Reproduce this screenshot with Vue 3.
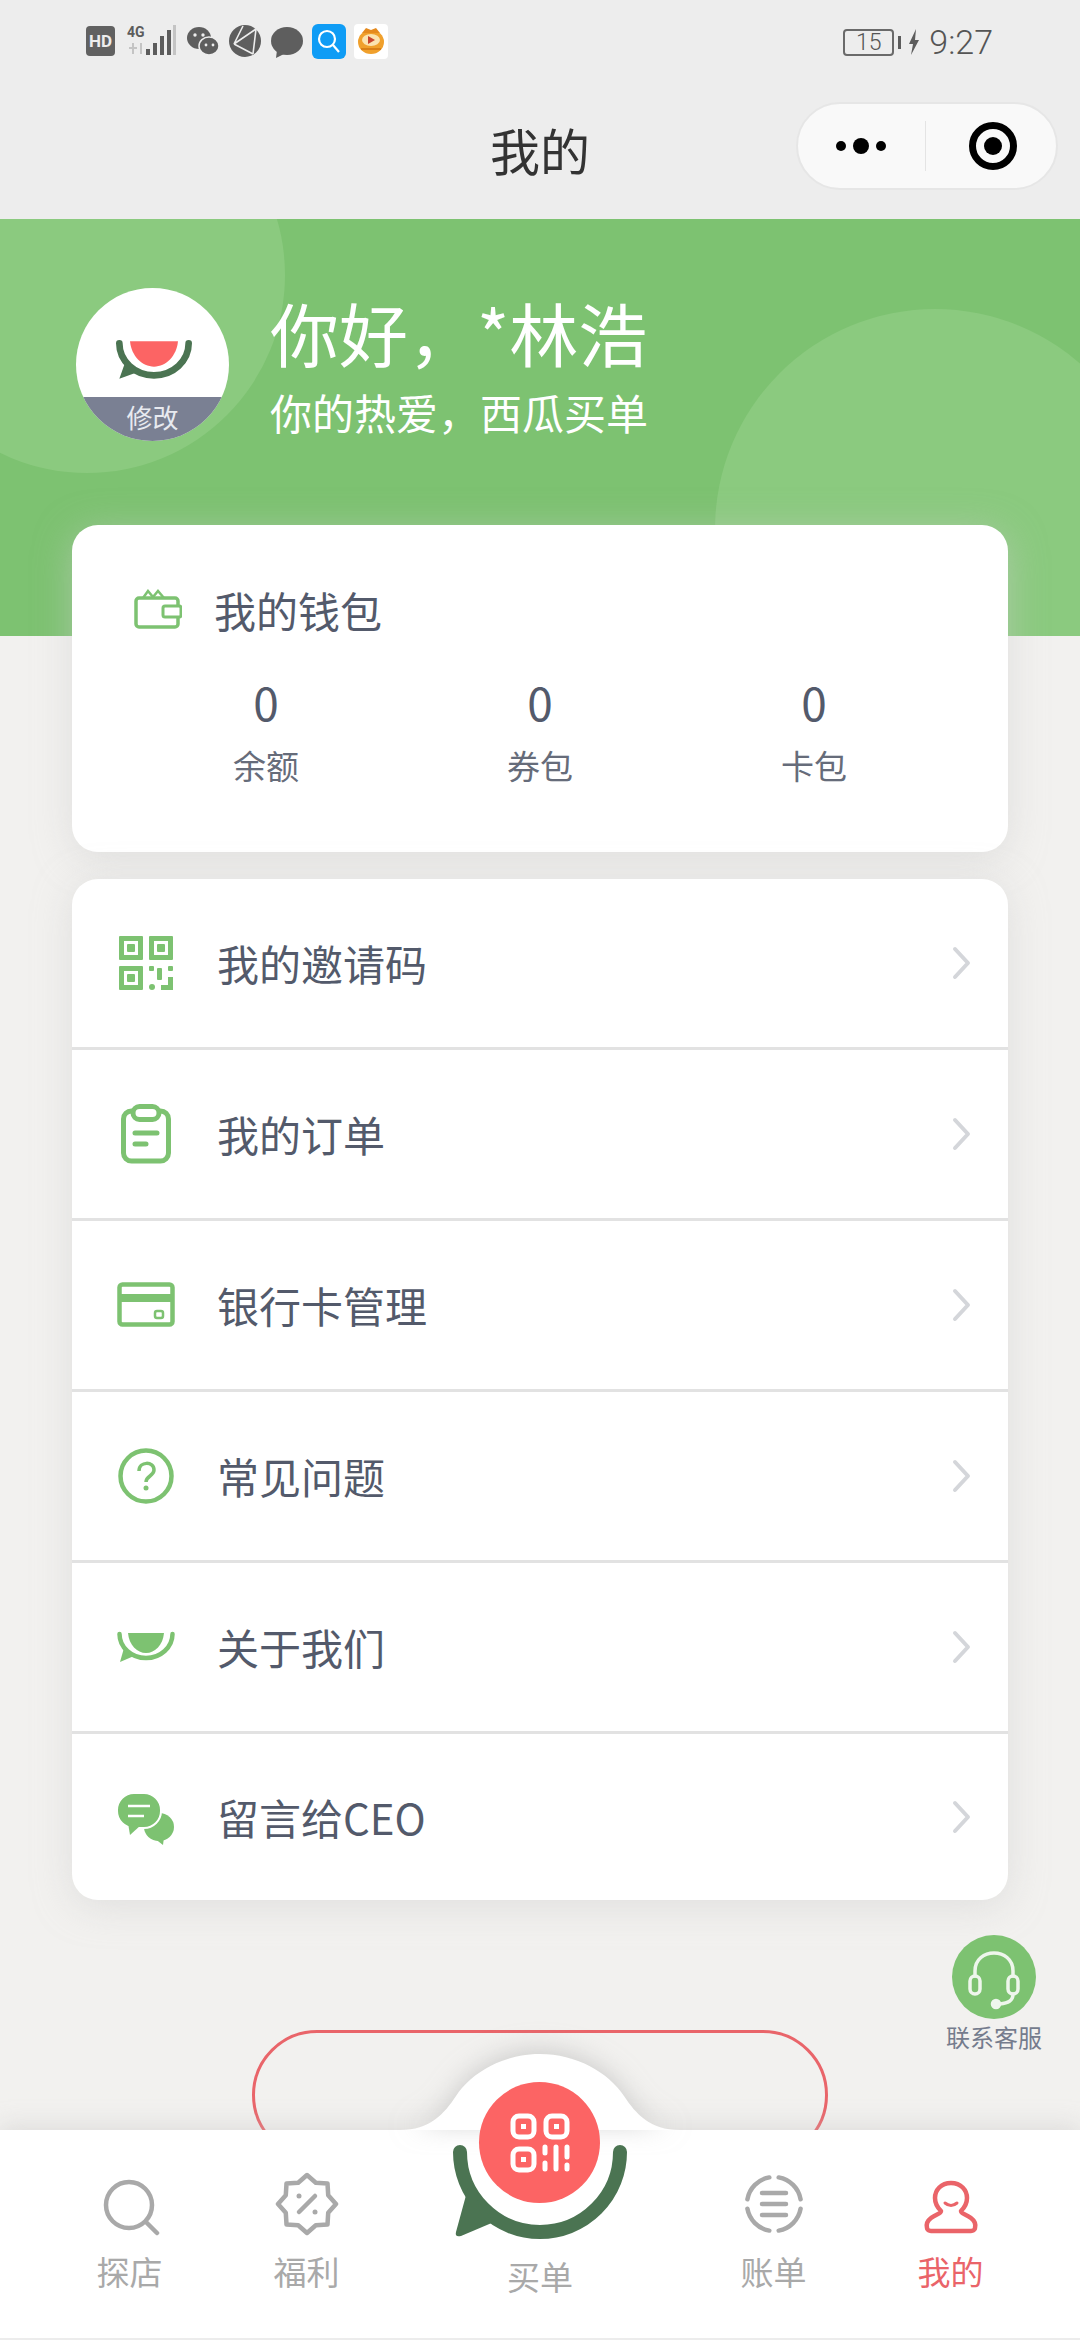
<template>
  <div class="page">
    <header class="top">
      <div class="status">
        <svg class="status-left" viewBox="86 24 302 36" width="302" height="36">
          <rect x="86" y="26" width="29" height="30" rx="4" fill="#616161" />
          <text x="100.5" y="47" class="st hd" text-anchor="middle">HD</text>
          <text x="127" y="37" class="st g4">4G</text>
          <path d="M129 48h8M133 43v11" stroke="#c4c4c4" stroke-width="2" fill="none" />
          <path d="M141 43v11" stroke="#c4c4c4" stroke-width="2" />
          <rect x="146" y="49" width="4" height="6" fill="#5c5c5c" />
          <rect x="153" y="43" width="4" height="12" fill="#5c5c5c" />
          <rect x="160" y="36" width="4" height="19" fill="#5c5c5c" />
          <rect x="167" y="30" width="4" height="25" fill="#5c5c5c" />
          <rect x="173" y="25" width="3" height="30" fill="#c4c4c4" />
          <ellipse cx="199" cy="38" rx="12" ry="11" fill="#5e5e5e" />
          <ellipse cx="209" cy="46" rx="10" ry="9" fill="#5e5e5e" stroke="#ededed" stroke-width="1.5" />
          <circle cx="195" cy="35" r="1.7" fill="#ededed" />
          <circle cx="203" cy="35" r="1.7" fill="#ededed" />
          <circle cx="206" cy="45" r="1.4" fill="#ededed" />
          <circle cx="213" cy="45" r="1.4" fill="#ededed" />
          <circle cx="245" cy="41" r="16" fill="#5e5e5e" />
          <path d="M256 29l-3 25M234 44l22 -15M234 44l19 10M243 26l-9 18" stroke="#ededed" stroke-width="1.6" fill="none" />
          <ellipse cx="287" cy="41" rx="16" ry="14" fill="#5e5e5e" />
          <path d="M277 50l-1 8l10 -5z" fill="#5e5e5e" />
          <rect x="312" y="24" width="34" height="35" rx="6" fill="#0f9cf5" />
          <circle cx="327" cy="39" r="8" fill="none" stroke="#fff" stroke-width="2.2" />
          <path d="M333 45l6 7" stroke="#fff" stroke-width="2.2" />
          <rect x="354" y="24" width="34" height="35" rx="4" fill="#fff" />
          <ellipse cx="371" cy="42" rx="13" ry="12" fill="#f0a02c" />
          <path d="M362 33l4 -5l5 2l5 -2l4 5z" fill="#e58a1e" />
          <ellipse cx="371" cy="40" rx="9" ry="6" fill="#fbe3b0" />
          <path d="M368 36l7 4l-7 4z" fill="#c9432b" />
          <path d="M361 49h20" stroke="#d97f16" stroke-width="2" />
        </svg>
        <div class="status-right">
          <div class="battery">15</div>
          <span class="battery-cap"></span>
          <svg width="12" height="26" viewBox="0 0 12 26"><path d="M8 0L1 15h4l-2 11l8 -15H7z" fill="#5c5c5c" /></svg>
          <span class="time">9:27</span>
        </div>
      </div>
      <div class="nav">
        <span></span>
        <h1 class="title">我的</h1>
        <div class="capsule">
          <svg class="cap-dots" viewBox="0 0 52 16" width="52" height="16">
            <circle cx="6" cy="8" r="5" fill="#000" />
            <circle cx="26" cy="8" r="8" fill="#000" />
            <circle cx="46" cy="8" r="5" fill="#000" />
          </svg>
          <i class="cap-line"></i>
          <svg class="cap-target" viewBox="0 0 50 50" width="50" height="50">
            <circle cx="25" cy="25" r="20.5" fill="none" stroke="#000" stroke-width="7" />
            <circle cx="25" cy="25" r="9" fill="#000" />
          </svg>
        </div>
      </div>
    </header>

    <section class="hero">
      <i class="blob blob-a"></i>
      <i class="blob blob-b"></i>
      <div class="avatar">
        <svg class="avatar-logo" viewBox="0 0 58 30" width="78" height="40">
          <path d="M3 2.5A26 24 0 0 0 55 2.500" fill="none" stroke="#4b7452" stroke-width="5" stroke-linecap="round" />
          <path d="M11 1H47C46 12 38 20 29 20S12 12 11 1Z" fill="#fc6464" />
          <path d="M8 15L3 29L17 24Z" fill="#4b7452" />
        </svg>
        <div class="avatar-edit">修改</div>
      </div>
      <div class="hello">
        <div class="hello-name">你好，*林浩</div>
        <div class="hello-sub">你的热爱，西瓜买单</div>
      </div>
    </section>

    <main class="content">
      <section class="card wallet">
        <div class="wallet-head">
          <svg viewBox="0 0 48 40" width="48" height="40">
            <path d="M9 9L14 2L19 8L24 2L30 9" fill="none" stroke="#7dc271" stroke-width="2.500" />
            <path d="M44 16V12a3 3 0 0 0 -3 -3H5a3 3 0 0 0 -3 3V35a3 3 0 0 0 3 3H41a3 3 0 0 0 3 -3V29" fill="none" stroke="#7dc271" stroke-width="3.500" />
            <rect x="29" y="17" width="18" height="11" rx="2" fill="#fff" stroke="#7dc271" stroke-width="3" />
          </svg>
          <span>我的钱包</span>
        </div>
        <div class="wallet-stats">
          <div v-for="item in wallet" :key="item" class="stat">
            <div class="stat-num">0</div>
            <div class="stat-label">{{ item }}</div>
          </div>
        </div>
      </section>

      <section class="card menu">
        <div v-for="row in rows" :key="row.key" class="row">
          <div class="row-icon">
            <svg v-if="row.key === 'qr'" viewBox="0 0 60 60" width="60" height="60" fill="#7dc271">
              <path fill-rule="evenodd" d="M4 3h22a1 1 0 0 1 1 1v22a1 1 0 0 1 -1 1H4a1 1 0 0 1 -1 -1V4a1 1 0 0 1 1 -1zM8 8v14h14V8zM34 3h22a1 1 0 0 1 1 1v22a1 1 0 0 1 -1 1H34a1 1 0 0 1 -1 -1V4a1 1 0 0 1 1 -1zM38 8v14h14V8zM4 33h22a1 1 0 0 1 1 1v22a1 1 0 0 1 -1 1H4a1 1 0 0 1 -1 -1V34a1 1 0 0 1 1 -1zM8 38v14h14V38z" />
              <rect x="11" y="11" width="8" height="8" rx="1" />
              <rect x="41" y="11" width="8" height="8" rx="1" />
              <rect x="11" y="41" width="8" height="8" rx="1" />
              <rect x="33" y="33" width="5" height="5" rx="1" />
              <rect x="41" y="35" width="5" height="12" rx="1" />
              <rect x="52" y="33" width="5" height="5" rx="1" />
              <rect x="33" y="51" width="6" height="6" rx="3" />
              <path d="M45 52h7v-8h5v13H45z" />
            </svg>
            <svg v-else-if="row.key === 'order'" viewBox="0 0 60 60" width="60" height="60" fill="none" stroke="#7dc271" stroke-width="5" stroke-linecap="round">
              <rect x="7.500" y="7" width="45" height="50" rx="8" />
              <rect x="17" y="2.500" width="26" height="13" rx="6.500" fill="#fff" />
              <path d="M19 29H41M19 40H30" />
            </svg>
            <svg v-else-if="row.key === 'card'" viewBox="0 0 60 60" width="60" height="60" fill="none">
              <rect x="3.500" y="9.500" width="53" height="40" rx="3" stroke="#7dc271" stroke-width="4.500" />
              <rect x="3" y="19" width="54" height="8" fill="#7dc271" />
              <rect x="39" y="36" width="8" height="7" rx="2" stroke="#7dc271" stroke-width="2.500" />
            </svg>
            <svg v-else-if="row.key === 'faq'" viewBox="0 0 60 60" width="60" height="60">
              <circle cx="30" cy="30" r="25.500" fill="none" stroke="#7dc271" stroke-width="4.500" />
              <path d="M23 25c0 -10 15 -10 15 -1c0 6 -8 6 -8 12" fill="none" stroke="#7dc271" stroke-width="3.500" />
              <circle cx="30" cy="42" r="2.500" fill="#7dc271" />
            </svg>
            <svg v-else-if="row.key === 'about'" viewBox="0 0 60 60" width="60" height="60">
              <path d="M3.500 17A26.500 24 0 0 0 56.500 17" fill="none" stroke="#7dc271" stroke-width="4.500" stroke-linecap="round" />
              <path d="M12 16H48C47 28 39 36 30 36S13 28 12 16Z" fill="#7dc271" />
              <path d="M8 31L4 45L18 39Z" fill="#7dc271" />
            </svg>
            <svg v-else viewBox="0 0 60 60" width="60" height="60">
              <ellipse cx="43" cy="40" rx="15" ry="14" fill="#7dc271" />
              <path d="M38 51L47 58L48 50Z" fill="#7dc271" />
              <rect x="1" y="6" width="44" height="35" rx="17" fill="#7dc271" stroke="#fff" stroke-width="2" />
              <path d="M12 36L14 48L25 38Z" fill="#7dc271" />
              <path d="M12 19H34M12 29H28" stroke="#fff" stroke-width="2.500" />
            </svg>
          </div>
          <span class="row-text">{{ row.text }}</span>
          <svg class="row-arrow" viewBox="0 0 20 34" width="20" height="34">
            <path d="M3 3L16 17L3 31" fill="none" stroke="#d4d6da" stroke-width="4" stroke-linecap="round" stroke-linejoin="round" />
          </svg>
        </div>
      </section>

      <div class="logout"></div>
    </main>

    <div class="service">
      <div class="service-btn">
        <svg viewBox="0 0 84 84" width="84" height="84" fill="none" stroke="#eef6ec" stroke-width="3.500" stroke-linecap="round">
          <path d="M23 41V36C23 12 61 12 61 36V41" />
          <rect x="18" y="41" width="10" height="18" rx="5" />
          <rect x="56" y="41" width="10" height="18" rx="5" />
          <path d="M61 59C61 66 56 68 48 69" />
          <circle cx="44" cy="69" r="3.500" fill="#eef6ec" />
        </svg>
      </div>
      <div class="service-text">联系客服</div>
    </div>

    <nav class="tabs">
      <svg class="tabs-bump" viewBox="0 0 280 80" width="280" height="80">
        <path d="M0 80C30 80 44 64 56 46C72 22 104 4 140 4C176 4 208 22 224 46C236 64 250 80 280 80Z" fill="#fff" />
      </svg>
      <div class="tab">
        <svg viewBox="0 0 64 64" width="64" height="64" fill="none" stroke="#a9a9a9" stroke-width="4.500" stroke-linecap="round">
          <circle cx="31" cy="33" r="23" />
          <path d="M48 50L59 61" />
        </svg>
        <span>探店</span>
      </div>
      <div class="tab">
        <svg viewBox="0 0 64 64" width="64" height="64" fill="none" stroke="#a9a9a9" stroke-width="4.500" stroke-linejoin="round" stroke-linecap="round">
          <path d="M61 32L53.200 40.800L52.500 52.500L40.800 53.200L32 61L23.200 53.200L11.500 52.500L10.800 40.800L3 32L10.800 23.200L11.500 11.500L23.200 10.800L32 3L40.800 10.800L52.500 11.500L53.200 23.200Z" />
          <path d="M24 40L40 24" />
          <circle cx="24" cy="24" r="2.500" fill="#a9a9a9" stroke="none" />
          <circle cx="40" cy="40" r="2.500" fill="#a9a9a9" stroke="none" />
        </svg>
        <span>福利</span>
      </div>
      <div class="tab tab-center">
        <div class="scan-logo">
          <svg viewBox="0 0 176 100" width="176" height="100">
            <path d="M8 8A80 80 0 0 0 168 8" fill="none" stroke="#4b7452" stroke-width="14" stroke-linecap="round" />
            <path d="M16 44L4 88C3 92 5 93 9 92L42 78Z" fill="#4b7452" />
          </svg>
          <div class="scan-btn">
            <svg viewBox="0 0 60 60" width="60" height="60" fill="none" stroke="#fff" stroke-width="5">
              <rect x="3" y="3" width="21" height="21" rx="6" />
              <rect x="3" y="36" width="21" height="21" rx="6" />
              <rect x="36" y="3" width="21" height="21" rx="6" />
              <rect x="11" y="11" width="5" height="5" fill="#fff" stroke="none" />
              <rect x="11" y="44" width="5" height="5" fill="#fff" stroke="none" />
              <rect x="44" y="11" width="5" height="5" fill="#fff" stroke="none" />
              <path d="M35 34v6M35 50v6M46 34v22M57 34v10M57 52v4" stroke-linecap="round" />
            </svg>
          </div>
        </div>
        <span>买单</span>
      </div>
      <div class="tab">
        <svg viewBox="0 0 64 64" width="64" height="64" fill="none" stroke="#a9a9a9" stroke-width="4.500" stroke-linecap="round">
          <path d="M58.600 27.300A27 27 0 0 0 36.700 5.400M27.300 5.400A27 27 0 0 0 5.400 27.300M5.400 36.700A27 27 0 0 0 27.300 58.600M36.700 58.600A27 27 0 0 0 58.600 36.700" />
          <path d="M20 21H44M20 32H44M20 43H44" />
        </svg>
        <span>账单</span>
      </div>
      <div class="tab tab-on">
        <svg viewBox="0 0 64 64" width="64" height="64" fill="none" stroke="#ea6469" stroke-width="4.500" stroke-linecap="round" stroke-linejoin="round">
          <g transform="translate(0 5)">
            <path d="M32 6C22 6 16 13 16 21C16 27 19 31 22 34C22 37 17 37 12 41C8 44 7 47 8 51C8 53 10 54 12 54H52C54 54 56 53 56 51C57 47 56 44 52 41C47 37 42 37 42 34C45 31 48 27 48 21C48 13 42 6 32 6Z" />
            <path d="M26 26Q32 31 38 26" stroke-width="3" />
          </g>
        </svg>
        <span>我的</span>
      </div>
    </nav>
  </div>
</template>

<script setup>
const wallet = ['余额', '券包', '卡包']

const rows = [
  { key: 'qr', text: '我的邀请码' },
  { key: 'order', text: '我的订单' },
  { key: 'card', text: '银行卡管理' },
  { key: 'faq', text: '常见问题' },
  { key: 'about', text: '关于我们' },
  { key: 'ceo', text: '留言给CEO' }
]
</script>

<style scoped>
.page {
  position: relative;
  width: 1080px;
  height: 2340px;
  overflow: hidden;
  background: #f2f1ef;
  font-family: "Noto Sans CJK SC", "Noto Sans", sans-serif;
  color: #535a6b;
}

.top {
  height: 219px;
  background: #ededed;
}

.status {
  height: 84px;
  padding: 0 87px 0 86px;
  box-sizing: border-box;
  display: flex;
  align-items: center;
  justify-content: space-between;
}

.status-left {
  display: block;
}

.st {
  font-family: "Roboto", sans-serif;
  font-weight: 700;
}

.hd {
  font-size: 17px;
  fill: #ededed;
}

.g4 {
  font-size: 14px;
  fill: #5c5c5c;
}

.status-right {
  display: flex;
  align-items: center;
}

.battery {
  width: 51px;
  height: 27px;
  box-sizing: border-box;
  border: 2px solid #6a6a6a;
  border-radius: 4px;
  font: 300 23px/23px "Roboto", sans-serif;
  color: #555;
  text-align: center;
}

.battery-cap {
  width: 3px;
  height: 13px;
  margin: 0 7px 0 4px;
  background: #5c5c5c;
}

.time {
  margin-left: 9px;
  font: 300 34px/40px "Roboto", sans-serif;
  color: #555;
}

.nav {
  height: 135px;
  display: grid;
  grid-template-columns: 1fr auto 1fr;
  align-items: center;
}

.title {
  margin: 0 0 5px;
  font-size: 50px;
  font-weight: 400;
  line-height: 60px;
  color: #333;
}

.capsule {
  justify-self: end;
  width: 262px;
  height: 88px;
  margin: 0 22px 12px 0;
  box-sizing: border-box;
  border: 2px solid #e6e6e6;
  border-radius: 44px;
  background: #f9f9f9;
  display: flex;
  align-items: center;
  padding-left: 37px;
}

.cap-line {
  width: 1px;
  height: 50px;
  margin: 0 42px 0 38px;
  background: #e4e4e4;
}

.hero {
  position: relative;
  height: 417px;
  overflow: hidden;
  box-sizing: border-box;
  padding: 69px 0 0 76px;
  background: #7dc271;
  display: flex;
  align-items: flex-start;
}

.blob {
  position: absolute;
  border-radius: 50%;
  background: #8bca7f;
}

.blob-a {
  left: -111px;
  top: -142px;
  width: 396px;
  height: 396px;
}

.blob-b {
  left: 715px;
  top: 90px;
  width: 440px;
  height: 440px;
}

.avatar {
  position: relative;
  width: 153px;
  height: 153px;
  border-radius: 50%;
  overflow: hidden;
  background: #fff;
  flex: none;
}

.avatar-logo {
  display: block;
  margin: 52px 0 0 39px;
}

.avatar-edit {
  position: absolute;
  left: 0;
  right: 0;
  bottom: 0;
  height: 44px;
  background: #7a8093;
  color: #e8eaf0;
  font-size: 26px;
  line-height: 40px;
  text-align: center;
}

.hello {
  position: relative;
  margin-left: 41px;
  color: #fff;
}

.hello-name {
  font-size: 69px;
  line-height: 92px;
  margin-top: -2px;
}

.hello-sub {
  font-size: 42px;
  line-height: 58px;
  margin-top: 5px;
  white-space: nowrap;
}

.content {
  position: relative;
  margin-top: -111px;
  padding: 0 72px;
  display: flex;
  flex-direction: column;
}

.card {
  background: #fff;
  border-radius: 26px;
  box-shadow: 0 6px 36px rgba(205, 205, 205, 0.5);
}

.wallet {
  height: 327px;
  box-sizing: border-box;
  padding: 59px 0 0;
}

.wallet-head {
  display: flex;
  align-items: center;
  height: 50px;
  padding-left: 62px;
  font-size: 42px;
}

.wallet-head span {
  margin-left: 32px;
}

.wallet-stats {
  display: grid;
  grid-template-columns: repeat(3, 274px);
  justify-content: center;
  margin-top: 34px;
}

.stat {
  text-align: center;
}

.stat-num {
  font-size: 46px;
  line-height: 66px;
}

.stat-label {
  font-size: 33px;
  line-height: 46px;
  margin-top: 8px;
  color: #666c7a;
}

.menu {
  margin-top: 27px;
  height: 1021px;
  overflow: hidden;
}

.row {
  height: 171px;
  box-sizing: border-box;
  border-bottom: 3px solid #e2e2e2;
  display: flex;
  align-items: center;
  padding: 0 36px 0 44px;
}

.row:last-child {
  border-bottom: 0;
  height: 166px;
}

.row-icon {
  width: 60px;
  height: 60px;
  flex: none;
}

.row-icon svg {
  display: block;
}

.row-text {
  flex: 1;
  margin-left: 41px;
  font-size: 42px;
  line-height: 56px;
}

.logout {
  width: 576px;
  height: 130px;
  margin: 130px auto 0;
  box-sizing: border-box;
  border: 3px solid #e9656a;
  border-radius: 65px;
}

.service {
  position: absolute;
  left: 946px;
  top: 1935px;
  width: 95px;
}

.service-btn {
  width: 84px;
  height: 84px;
  margin: 0 auto;
  border-radius: 50%;
  background: #7dc271;
}

.service-btn svg {
  display: block;
}

.service-text {
  margin-top: 1px;
  font-size: 24px;
  line-height: 34px;
  color: #757c8d;
  text-align: center;
  white-space: nowrap;
}

.tabs {
  position: absolute;
  left: 0;
  right: 0;
  bottom: 0;
  height: 210px;
  box-sizing: border-box;
  padding: 42px 41px 0;
  background: #fff;
  border-bottom: 2px solid #ececec;
  box-shadow: 0 -4px 22px rgba(190, 190, 190, 0.4);
  display: grid;
  grid-template-columns: 177px 177px 1fr 177px 177px;
  align-items: start;
}

.tabs-bump {
  position: absolute;
  left: 400px;
  top: -80px;
  filter: drop-shadow(0 -4px 12px rgba(170, 170, 170, 0.5));
}

.tab {
  position: relative;
  display: flex;
  flex-direction: column;
  align-items: center;
  font-size: 33px;
  line-height: 46px;
  color: #a9a9a9;
}

.tab svg {
  display: block;
}

.tab span {
  margin-top: 12px;
}

.tab-on {
  color: #ea6469;
}

.tab-center span {
  margin-top: 21px;
}

.scan-logo {
  position: relative;
  width: 176px;
  height: 60px;
}

.scan-logo > svg {
  position: absolute;
  left: 0;
  top: -28px;
}

.scan-logo > .scan-btn {
  position: absolute;
  left: 27px;
  top: -90px;
  width: 121px;
  height: 121px;
  border-radius: 50%;
  background: #fc6464;
  display: flex;
  align-items: center;
  justify-content: center;
}
</style>

<style>
html,
body {
  margin: 0;
  background: #f2f1ef;
}
</style>
